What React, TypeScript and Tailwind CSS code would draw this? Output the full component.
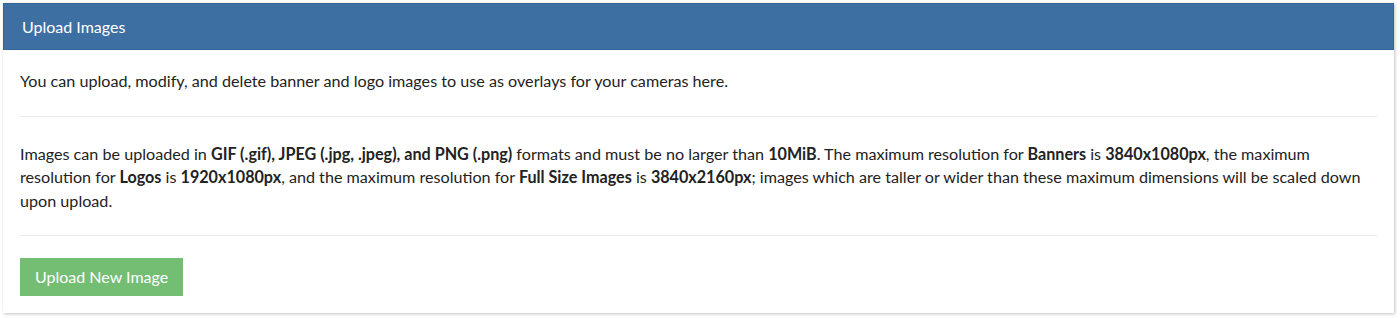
export default function App() {
    return (
        <div className="min-h-[318px] bg-white pl-[3px] pr-[6px] pt-[3px] font-['Lato',sans-serif]">
            <div className="bg-white shadow-[1px_1px_3px_rgba(0,0,0,0.25)]">
                <div className="flex h-[47px] items-center bg-[#3e6fa2] px-[18px] text-[16px] text-white border border-[#36659a]">
                    Upload Images
                </div>
                <div className="px-[17px] pb-[17px] pt-[19px] text-[16.15px] leading-[23.5px] text-[#222]">
                    <p>You can upload, modify, and delete banner and logo images to use as overlays for your cameras here.</p>
                    <hr className="mt-[23px] border-t border-[#eaeaea]" />
                    <p className="mt-[25px]">
                        Images can be uploaded in <b>GIF (.gif), JPEG (.jpg, .jpeg), and PNG (.png)</b> formats and must be no larger than <b>10MiB</b>. The maximum resolution for <b>Banners</b> is <b>3840x1080px</b>, the maximum resolution for <b>Logos</b> is <b>1920x1080px</b>, and the maximum resolution for <b>Full Size Images</b> is <b>3840x2160px</b>; images which are taller or wider than these maximum dimensions will be scaled down upon upload.
                    </p>
                    <hr className="mt-[23px] border-t border-[#eaeaea]" />
                    <button className="mt-[22px] h-[38px] bg-[#74be74] px-[15px] text-[16px] text-white">
                        Upload New Image
                    </button>
                </div>
            </div>
        </div>
    )
}
